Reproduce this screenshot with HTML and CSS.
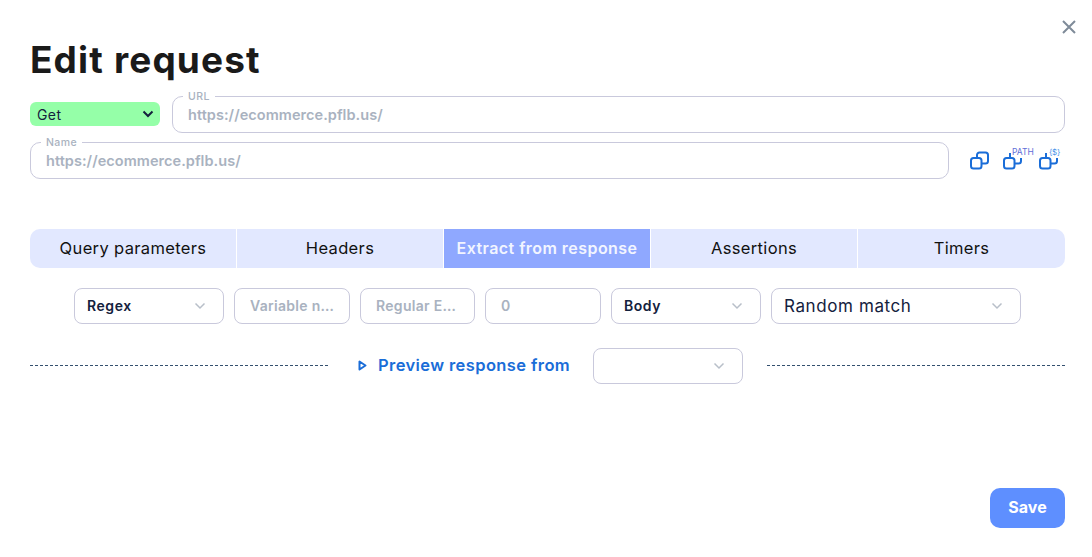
FILE: index.html
```html
<!DOCTYPE html>
<html lang="en">
<head>
<meta charset="utf-8">
<title>Edit request</title>
<link rel="stylesheet" href="styles.css">
</head>
<body>
<main class="modal">
  <button class="close" aria-label="Close">
    <svg width="14" height="14" viewBox="0 0 14 14"><path d="M1 1l12 12M13 1L1 13" fill="none" stroke="#7f8b99" stroke-width="2"/></svg>
  </button>
  <h1 class="title">Edit request</h1>
  <div class="row-url">
    <div class="method"><span>Get</span>
      <svg width="12" height="8" viewBox="0 0 12 8"><path d="M1.500 1.500L6 6l4.500-4.500" fill="none" stroke="#14213d" stroke-width="2"/></svg>
    </div>
    <div class="field field-grow">
      <label class="field-label">URL</label>
      <input class="field-input" value="https://ecommerce.pflb.us/">
    </div>
  </div>
  <div class="row-name">
    <div class="field field-grow">
      <label class="field-label">Name</label>
      <input class="field-input" value="https://ecommerce.pflb.us/">
    </div>
    <div class="icons">
      <svg class="icon-copy" width="20" height="20" viewBox="0 0 20 20"><rect x="1" y="7" width="10.500" height="10.500" rx="2.500" fill="none" stroke="#1a6dd8" stroke-width="2"/><path d="M7 6.500V4a2.500 2.500 0 0 1 2.500-2.500h6A2.500 2.500 0 0 1 18 4v6a2.500 2.500 0 0 1-2.500 2.500H12" fill="none" stroke="#1a6dd8" stroke-width="2"/></svg>
      <div class="icon-tag icon-path">
        <svg width="20" height="20" viewBox="0 0 20 20"><rect x="1" y="7" width="10.500" height="10.500" rx="2.500" fill="none" stroke="#1a6dd8" stroke-width="2"/><path d="M7 7V2M12 12.500h3.500a2.500 2.500 0 0 0 2.500-2.500V7" fill="none" stroke="#1a6dd8" stroke-width="2"/></svg>
        <span class="tag">PATH</span>
      </div>
      <div class="icon-tag icon-dollar">
        <svg width="20" height="20" viewBox="0 0 20 20"><rect x="1" y="7" width="10.500" height="10.500" rx="2.500" fill="none" stroke="#1a6dd8" stroke-width="2"/><path d="M7 7V2M12 12.500h3.500a2.500 2.500 0 0 0 2.500-2.500V7" fill="none" stroke="#1a6dd8" stroke-width="2"/></svg>
        <span class="tag">{$}</span>
      </div>
    </div>
  </div>
  <nav class="tabs">
    <div class="tab">Query parameters</div>
    <div class="tab">Headers</div>
    <div class="tab tab-active">Extract from response</div>
    <div class="tab">Assertions</div>
    <div class="tab tab-last">Timers</div>
  </nav>
  <div class="filters">
    <div class="select select-150 select-bold"><span>Regex</span><svg class="chev" width="12" height="8" viewBox="0 0 12 8"><path d="M1.500 1.500L6 6l4.500-4.500" fill="none" stroke="#b8bfc9" stroke-width="1.500"/></svg></div>
    <input class="box box-116" placeholder="Variable name">
    <input class="box box-115" placeholder="Regular Expression">
    <input class="box box-116" placeholder="0">
    <div class="select select-150 select-bold"><span>Body</span><svg class="chev" width="12" height="8" viewBox="0 0 12 8"><path d="M1.500 1.500L6 6l4.500-4.500" fill="none" stroke="#b8bfc9" stroke-width="1.500"/></svg></div>
    <div class="select select-250 select-regular"><span>Random match</span><svg class="chev" width="12" height="8" viewBox="0 0 12 8"><path d="M1.500 1.500L6 6l4.500-4.500" fill="none" stroke="#b8bfc9" stroke-width="1.500"/></svg></div>
  </div>
  <div class="preview">
    <div class="dash dash-left"></div>
    <svg class="play" width="9" height="11" viewBox="0 0 9 11"><path d="M1.500 1.500v8l6-4z" fill="none" stroke="#1a6dd8" stroke-width="2" stroke-linejoin="round"/></svg>
    <span class="preview-text">Preview response from</span>
    <div class="select select-150"><span></span><svg class="chev" width="12" height="8" viewBox="0 0 12 8"><path d="M1.500 1.500L6 6l4.500-4.500" fill="none" stroke="#b8bfc9" stroke-width="1.500"/></svg></div>
    <div class="dash dash-right"></div>
  </div>
  <div class="footer"><button class="save">Save</button></div>
</main>
</body>
</html>
```
FILE: styles.css
```css
* { box-sizing: border-box; }
html, body { margin: 0; padding: 0; background: #fff; }
body { width: 1092px; height: 557px; overflow: hidden; font-family: Inter, "Noto Sans", sans-serif; color: #14213d; }
.modal { position: relative; height: 557px; padding: 0 27px 0 30px; display: flex; flex-direction: column; }
.close { position: absolute; top: 20px; right: 16px; padding: 0; border: 0; background: none; width: 14px; height: 14px; display: flex; }
.title { margin: 38px 0 0; height: 58px; font-size: 37px; line-height: 44px; font-weight: 700; color: #1a1a1a; letter-spacing: 1.150px; }
.row-url { display: flex; align-items: center; gap: 12px; height: 37px; }
.method { width: 130px; height: 24px; margin-top: -1px; background: #95ffa8; border-radius: 6px; display: flex; align-items: center; justify-content: space-between; padding: 0 6px 0 7px; font-size: 14px; letter-spacing: 0.400px; }
.field { position: relative; height: 37px; border: 1px solid #c9c9dc; border-radius: 10px; display: flex; align-items: center; }
.field-grow { flex: 1; }
.field-label { position: absolute; top: -5px; left: 10px; padding: 0 5px; background: #fff; font-size: 10.500px; line-height: 10px; color: #a9b2c0; font-weight: 500; letter-spacing: 0.400px; }
.field-input { width: 100%; border: 0; outline: 0; background: none; padding: 0 15px 1px; font: 600 14.500px Inter, "Noto Sans", sans-serif; color: #a9b2c0; letter-spacing: 0.050px; }
.row-name { display: flex; align-items: center; margin-top: 9px; height: 37px; }
.row-name .field { margin-right: 21px; }
.icons { display: flex; width: 95px; height: 37px; flex: none; position: relative; }
.icon-copy { margin-top: 9px; }
.icon-tag { position: relative; height: 37px; }
.icon-tag svg { display: block; margin-top: 9px; }
.icon-path { margin-left: 13px; width: 37px; }
.icon-dollar { width: 20px; margin-left: -1px; }
.tag { position: absolute; top: 5px; left: 9px; font-size: 8.500px; line-height: 10px; color: #5f6ed8; }
.icon-dollar .tag { left: 10px; color: #3f8fe8; font-size: 8px; letter-spacing: -0.300px; }
.tabs { display: flex; gap: 1px; margin-top: 50px; height: 39px; border-radius: 10px; overflow: hidden; }
.tab { flex: 0 0 206px; background: #e2e8ff; display: flex; align-items: center; justify-content: center; padding-bottom: 2px; font-size: 16.500px; font-weight: 400; color: #111; letter-spacing: 0.350px; }
.tab-last { flex: 1; }
.tab-active { background: #8fa8ff; color: #f2f5ff; font-size: 16px; font-weight: 600; letter-spacing: 0.450px; }
.filters { display: flex; justify-content: center; gap: 10px; margin-top: 20px; height: 36px; }
.select { height: 36px; border: 1px solid #c9c9dc; border-radius: 8px; display: flex; align-items: center; justify-content: space-between; padding: 0 17px 1px 12px; background: #fff; flex: none; }
.select-150 { width: 150px; }
.select-250 { width: 250px; }
.select-bold { font-size: 14px; font-weight: 600; color: #14213d; letter-spacing: 0.550px; }
.select-regular { font-size: 17px; letter-spacing: 0.600px; }
.box { height: 36px; border: 1px solid #c9c9dc; border-radius: 8px; padding: 0 15px 1px; outline: 0; font: 600 14px Inter, "Noto Sans", sans-serif; letter-spacing: 0.300px; text-overflow: ellipsis; flex: none; }
.box::placeholder { color: #a9b2c0; opacity: 1; }
.box-116 { width: 116px; }
.box-115 { width: 115px; }
.preview { display: flex; align-items: center; margin-top: 24px; height: 36px; }
.dash { height: 0; margin-top: -1px; border-top: 1px dashed #33506f; flex: none; }
.dash-left { width: 298px; margin-right: 30px; }
.dash-right { width: 298px; margin-left: 24px; }
.play { flex: none; margin-right: 11px; margin-top: -1px; }
.preview-text { width: 191px; margin-right: 24px; padding-bottom: 2px; font-size: 16.500px; font-weight: 600; letter-spacing: 0.400px; color: #1a6dd8; white-space: nowrap; flex: none; }
.footer { display: flex; justify-content: flex-end; margin-top: 104px; }
.save { width: 75px; height: 40px; padding: 0 0 2px; border: 0; border-radius: 10px; background: #5e8fff; color: #fff; font: 700 16px Inter, "Noto Sans", sans-serif; }
```
